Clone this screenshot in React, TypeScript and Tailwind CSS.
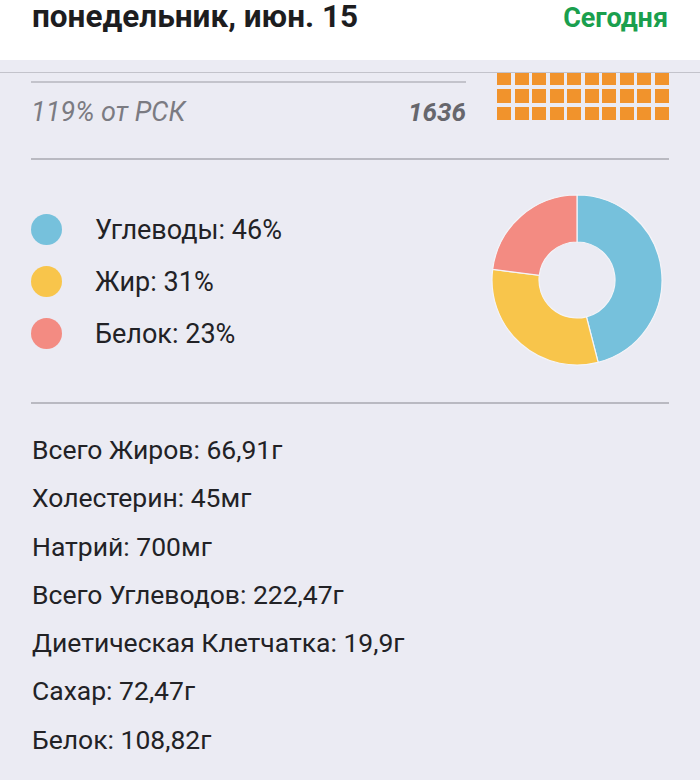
import React from "react";

interface Slice {
  label: string;
  pct: number;
  color: string;
}

const slices: Slice[] = [
  { label: "Углеводы", pct: 46, color: "#76c1dc" },
  { label: "Жир", pct: 31, color: "#f8c54b" },
  { label: "Белок", pct: 23, color: "#f38b82" },
];

const nutrients = [
  "Всего Жиров: 66,91г",
  "Холестерин: 45мг",
  "Натрий: 700мг",
  "Всего Углеводов: 222,47г",
  "Диетическая Клетчатка: 19,9г",
  "Сахар: 72,47г",
  "Белок: 108,82г",
];

// builds one ring segment, angles in degrees clockwise from top
const arcPath = (cx: number, cy: number, r1: number, r2: number, a0: number, a1: number) => {
  const p = (r: number, a: number) => {
    const rad = ((a - 90) * Math.PI) / 180;
    return `${(cx + r * Math.cos(rad)).toFixed(2)} ${(cy + r * Math.sin(rad)).toFixed(2)}`;
  };
  const large = a1 - a0 > 180 ? 1 : 0;
  return `M ${p(r2, a0)} A ${r2} ${r2} 0 ${large} 1 ${p(r2, a1)} L ${p(r1, a1)} A ${r1} ${r1} 0 ${large} 0 ${p(r1, a0)} Z`;
};

const Donut = () => {
  let start = 0;
  return (
    <svg width="172" height="172" viewBox="0 0 172 172">
      {slices.map((s) => {
        const end = start + (s.pct / 100) * 360;
        const d = arcPath(86, 86, 38, 85, start, end);
        start = end;
        return <path key={s.label} d={d} fill={s.color} stroke="#f4f4f8" strokeWidth="1.2" />;
      })}
    </svg>
  );
};

const App = () => {
  return (
    <div className="w-[700px] h-[780px] overflow-hidden bg-[#ebebf3] font-['Roboto',sans-serif] text-[#222226]">
      {/* header */}
      <div className="h-[60px] bg-white flex justify-between items-start px-8">
        <h1 className="text-[31.5px] leading-[34px] font-bold text-[#1d1d1f]">понедельник, июн. 15</h1>
        <span className="text-[27px] leading-[32px] font-bold text-[#1a9f4e] mt-[2px]">Сегодня</span>
      </div>

      <div className="mt-3 border-t border-[#c3c3cb]">
        {/* calories row, partly scrolled under the header */}
        <div className="flex px-[31px] h-[85px]">
          <div className="w-[435px]">
            <div className="mt-2 h-[2px] bg-[#c3c3cb]" />
            <div className="flex justify-between items-center mt-[9px]">
              <span className="text-[27px] italic text-[#7b7b82]">119% от РСК</span>
              <span className="text-[26px] italic font-bold text-[#66666c]">1636</span>
            </div>
          </div>
          <div className="ml-[31px] h-[47px] overflow-hidden">
            <div className="grid grid-cols-[repeat(10,14px)] gap-x-[3.5px] gap-y-[4px] mt-[-2px]">
              {Array.from({ length: 30 }).map((_, i) => (
                <div key={i} className="w-[14px] h-[14px] bg-[#f1932c]" />
              ))}
            </div>
          </div>
        </div>

        <div className="mx-[31px] h-[2px] bg-[#b9b9c1]" />

        {/* macros */}
        <div className="flex justify-between items-center px-[31px] h-[242px]">
          <div className="flex flex-col gap-[20px] mt-[1px]">
            {slices.map((s) => (
              <div key={s.label} className="flex items-center">
                <span className="w-[31px] h-[31px] rounded-full" style={{ backgroundColor: s.color }} />
                <span className="ml-[33px] text-[27px] leading-[32px]">
                  {s.label}: {s.pct}%
                </span>
              </div>
            ))}
          </div>
          <div className="mr-[6px] -mt-[3px]">
            <Donut />
          </div>
        </div>

        <div className="mx-[31px] h-[2px] bg-[#b9b9c1]" />

        {/* nutrient list */}
        <div className="px-8 pt-[22px]">
          {nutrients.map((n) => (
            <div key={n} className="text-[26.5px] leading-[48.3px]">
              {n}
            </div>
          ))}
        </div>
      </div>
    </div>
  );
};

export default App;
